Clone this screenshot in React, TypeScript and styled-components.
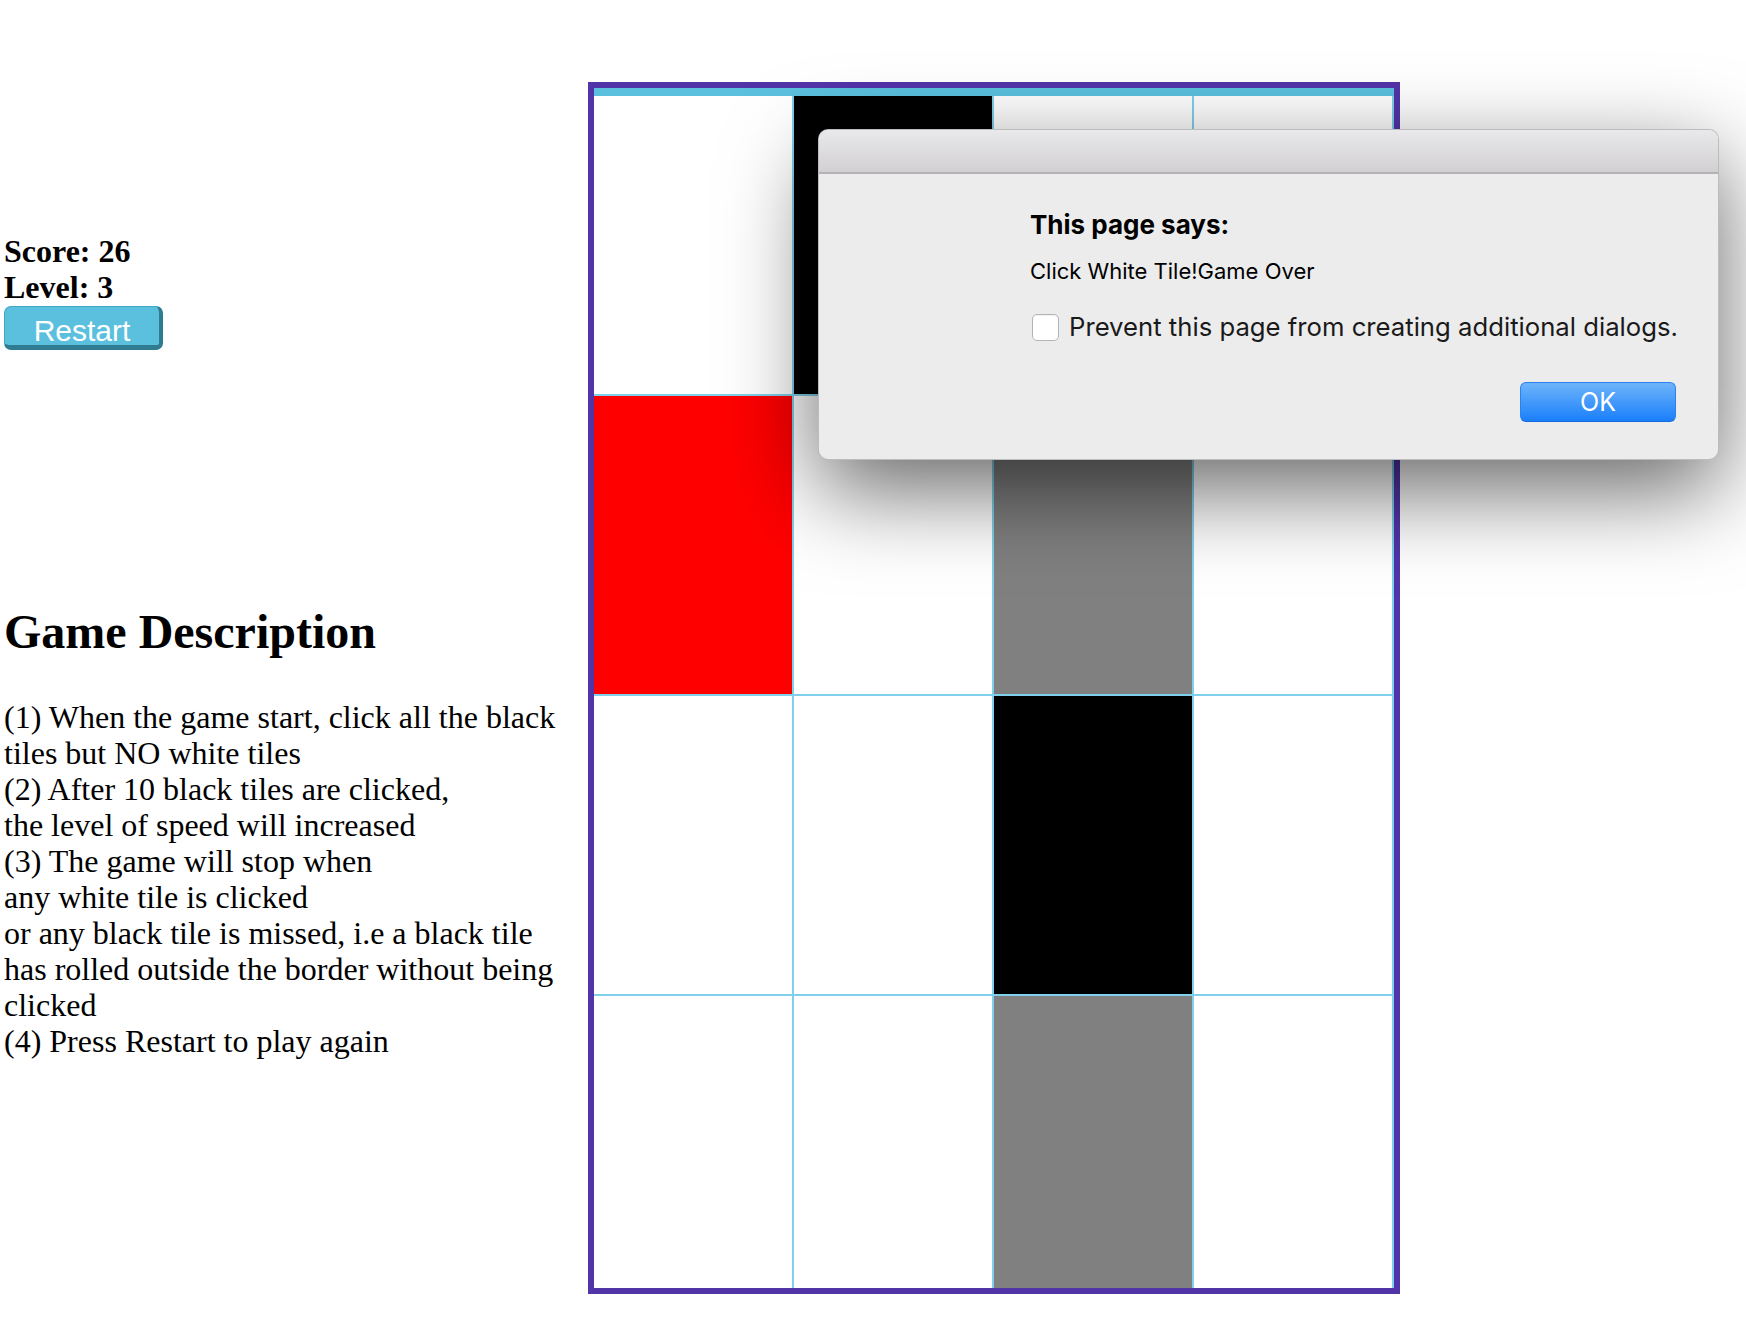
import * as React from 'react';
import styled, { createGlobalStyle } from 'styled-components';

const GlobalStyle = createGlobalStyle`
    html, body {
        margin: 0;
        padding: 0;
        background: #ffffff;
    }
    body {
        font-family: 'Liberation Serif', 'Times New Roman', serif;
        color: #000000;
        overflow: hidden;
    }
`;

const Page = styled.div`
    position: relative;
    display: flex;
    flex-direction: row;
    align-items: flex-start;
    min-height: 1342px;
`;

const SidePanel = styled.div`
    box-sizing: border-box;
    width: 588px;
    flex-shrink: 0;
    padding: 233px 0 0 4px;
`;

const StatLine = styled.div`
    font-size: 32px;
    line-height: 36px;
    font-weight: bold;
`;

const RestartButton = styled.button`
    box-sizing: border-box;
    display: block;
    width: 159px;
    height: 44px;
    margin-top: 1px;
    padding: 8px 0 0;
    background: #5bc0de;
    border: 1px solid #3fa9c8;
    border-right: 4px solid #2f7b91;
    border-bottom: 5px solid #2f7b91;
    border-radius: 7px;
    color: #ffffff;
    font-family: 'Liberation Sans', Arial, sans-serif;
    font-size: 30px;
    line-height: 29px;
    text-align: center;
    cursor: pointer;
`;

const Heading = styled.h2`
    margin: 254px 0 0;
    font-size: 48px;
    line-height: 55px;
    font-weight: bold;
`;

const Description = styled.p`
    margin: 40px 0 0;
    font-size: 32px;
    line-height: 36px;
    white-space: nowrap;
`;

const Board = styled.div`
    box-sizing: border-box;
    width: 812px;
    height: 1212px;
    margin-top: 82px;
    border: 6px solid #5234a9;
    overflow: hidden;
    flex-shrink: 0;
`;

const TopBand = styled.div`
    height: 8px;
    background: #5bc0de;
`;

const TileRow = styled.div`
    display: flex;
    flex-direction: row;
`;

const Tile = styled.div<{ $color: string }>`
    box-sizing: border-box;
    width: 200px;
    height: 300px;
    flex-shrink: 0;
    background: ${(p) => p.$color};
    border-right: 2px solid #7fd0ea;
    border-bottom: 2px solid #7fd0ea;
`;

const Dialog = styled.div`
    position: absolute;
    left: 818px;
    top: 129px;
    width: 901px;
    box-sizing: border-box;
    background: #ececec;
    border: 1px solid rgba(0, 0, 0, 0.2);
    border-radius: 10px;
    box-shadow: 0 30px 90px rgba(0, 0, 0, 0.6);
    overflow: hidden;
    font-family: Inter, 'Noto Sans', sans-serif;
    color: #000000;
`;

const TitleBar = styled.div`
    height: 42px;
    background: linear-gradient(#e9e8ea, #d2d0d2);
    border-bottom: 2px solid #b4b3b4;
`;

const DialogBody = styled.div`
    padding: 35px 42px 37px 211px;
`;

const DialogTitle = styled.div`
    font-size: 26px;
    line-height: 32px;
    font-weight: 700;
`;

const DialogMessage = styled.div`
    margin-top: 16px;
    font-size: 22px;
    line-height: 28px;
`;

const CheckRow = styled.label`
    display: flex;
    flex-direction: row;
    align-items: center;
    gap: 10px;
    margin-top: 26px;
    margin-left: 2px;
    font-size: 25.7px;
    line-height: 32px;
    white-space: nowrap;
    color: #1a1a1a;
`;

const CheckBox = styled.span`
    box-sizing: border-box;
    flex-shrink: 0;
    width: 27px;
    height: 27px;
    background: #ffffff;
    border: 1px solid #b4b4b4;
    border-radius: 5px;
    box-shadow: inset 0 1px 1px rgba(0, 0, 0, 0.06);
`;

const ButtonRow = styled.div`
    display: flex;
    justify-content: flex-end;
    margin-top: 39px;
`;

const OkButton = styled.button`
    box-sizing: border-box;
    width: 156px;
    height: 40px;
    padding: 0;
    background: linear-gradient(#6eb4fa, #1a7ffb);
    border: 1px solid #2a82f0;
    border-bottom-color: #1769e0;
    border-radius: 6px;
    color: #ffffff;
    font-family: Inter, 'Noto Sans', sans-serif;
    font-size: 25px;
    line-height: 38px;
    text-align: center;
`;

const W = '#ffffff';
const B = '#000000';
const R = '#ff0000';
const G = '#808080';

const rows: string[][] = [
    [W, B, W, W],
    [R, W, G, W],
    [W, W, B, W],
    [W, W, G, W],
];

const rules = [
    '(1) When the game start, click all the black',
    'tiles but NO white tiles',
    '(2) After 10 black tiles are clicked,',
    'the level of speed will increased',
    '(3) The game will stop when',
    'any white tile is clicked',
    'or any black tile is missed, i.e a black tile',
    'has rolled outside the border without being',
    'clicked',
    '(4) Press Restart to play again',
];

const App: React.FC = () => {
    return (
        <>
            <GlobalStyle />
            <Page>
                <SidePanel>
                    <StatLine>Score: 26</StatLine>
                    <StatLine>Level: 3</StatLine>
                    <RestartButton>Restart</RestartButton>
                    <Heading>Game Description</Heading>
                    <Description>
                        {rules.map((line, i) => (
                            <React.Fragment key={i + '-rule'}>
                                {line}
                                {i < rules.length - 1 && <br />}
                            </React.Fragment>
                        ))}
                    </Description>
                </SidePanel>
                <Board>
                    <TopBand />
                    {rows.map((row, i) => (
                        <TileRow key={i + '-row'}>
                            {row.map((color, j) => (
                                <Tile key={j + '-tile'} $color={color} />
                            ))}
                        </TileRow>
                    ))}
                </Board>
                <Dialog>
                    <TitleBar />
                    <DialogBody>
                        <DialogTitle>This page says:</DialogTitle>
                        <DialogMessage>Click White Tile!Game Over</DialogMessage>
                        <CheckRow>
                            <CheckBox />
                            Prevent this page from creating additional dialogs.
                        </CheckRow>
                        <ButtonRow>
                            <OkButton>OK</OkButton>
                        </ButtonRow>
                    </DialogBody>
                </Dialog>
            </Page>
        </>
    );
};

export default App;
